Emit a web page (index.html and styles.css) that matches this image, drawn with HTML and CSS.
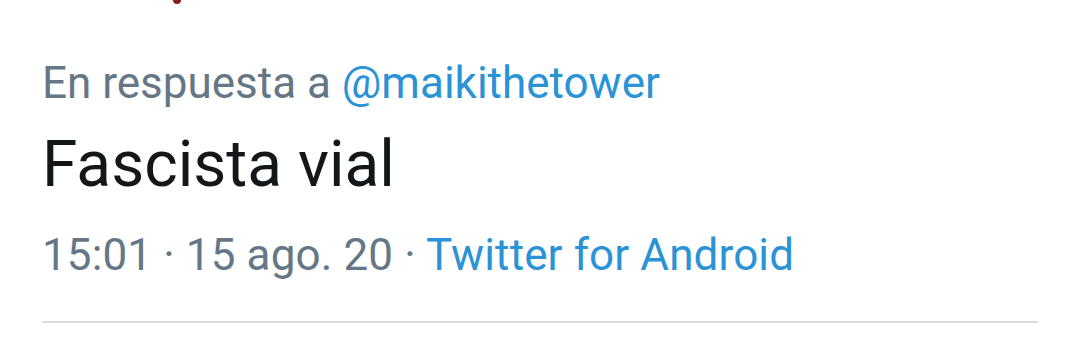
FILE: index.html
```html
<!DOCTYPE html>
<html lang="es">

<head>
    <meta charset="UTF-8">
    <meta name="viewport" content="width=device-width, initial-scale=1.0">
    <title>Tweet</title>
    <link rel="stylesheet" href="styles.css">
</head>

<body>
    <div class="tweet">
        <div class="clip"><span class="clip-dot"></span></div>
        <div class="reply">En respuesta a <a class="link">@maikithetower</a></div>
        <div class="text">Fascista vial</div>
        <div class="meta">15:01 · 15 ago. 20 · <a class="link">Twitter for Android</a></div>
        <div class="divider"></div>
    </div>
</body>

</html>
```

FILE: styles.css
```css
* {
    box-sizing: border-box;
    margin: 0;
    padding: 0;
}

body {
    font-family: Roboto, "Noto Sans", Arial, sans-serif;
    background-color: white;
    width: 1080px;
    height: 360px;
    overflow: hidden;
}

.tweet {
    padding: 0 42px;
}

.clip {
    height: 8px;
    display: flex;
}

.clip-dot {
    width: 8px;
    height: 5px;
    margin-left: 131px;
    margin-top: -1px;
    background-color: #8b1a1a;
    border-radius: 0 0 4px 4px;
}

.reply {
    font-size: 44px;
    line-height: 50px;
    margin-top: 50px;
    color: #657786;
}

.link {
    color: #2a93d5;
    text-decoration: none;
}

.text {
    font-size: 64px;
    line-height: 70px;
    margin-top: 22px;
    color: #14171a;
}

.meta {
    font-size: 44px;
    line-height: 50px;
    letter-spacing: 0.12px;
    margin-top: 30px;
    color: #657786;
}

.divider {
    height: 2px;
    margin-top: 41px;
    background-color: #d3dce2;
}
```
